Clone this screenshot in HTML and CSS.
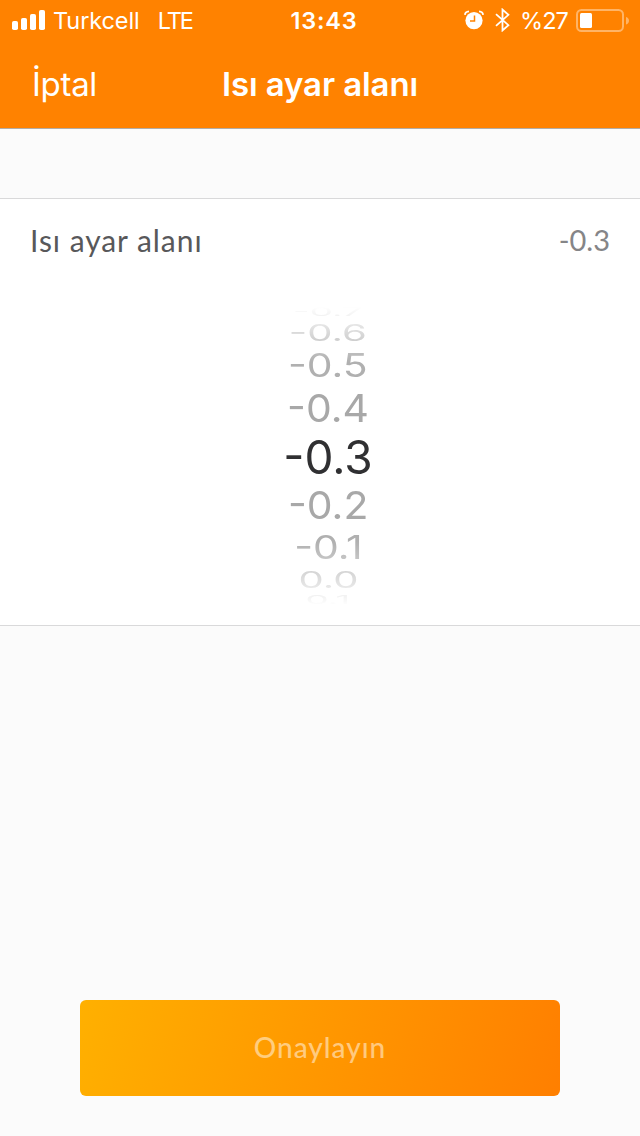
FILE: index.html
```html
<!DOCTYPE html>
<html lang="tr">
<head>
    <meta charset="UTF-8">
    <meta name="viewport" content="width=device-width, initial-scale=1.0">
    <title>Isı ayar alanı</title>
    <link rel="stylesheet" href="styles.css">
</head>
<body>
    <div class="container">
        <header>
            <div class="status-bar">
                <div class="status-left">
                    <svg class="signal" width="34" height="20" viewBox="0 0 34 20" fill="#fff">
                        <rect x="0" y="11" width="6" height="9" rx="1.8"/>
                        <rect x="9" y="8" width="6" height="12" rx="1.8"/>
                        <rect x="18" y="4" width="6" height="16" rx="1.8"/>
                        <rect x="27" y="0" width="6" height="20" rx="1.8"/>
                    </svg>
                    <span class="carrier">Turkcell</span>
                    <span class="network">LTE</span>
                </div>
                <span class="time">13:43</span>
                <div class="status-right">
                    <svg class="alarm" width="20" height="20" viewBox="0 0 20 20">
                        <path d="M0.9 4.8 Q1.2 1.6 5 1.3 M19.1 4.8 Q18.8 1.6 15 1.3" fill="none" stroke="#fff" stroke-width="1.8"/>
                        <circle cx="10" cy="10.6" r="8.6" fill="#fff"/>
                        <path d="M10.5 5.5 V11 H6" fill="none" stroke="#ff8200" stroke-width="1.5"/>
                    </svg>
                    <svg class="bluetooth" width="15" height="24" viewBox="0 0 15 24">
                        <path d="M1 6.2 L13.4 17.2 L7.5 22.4 V1.6 L13.4 6.8 L1 17.8" fill="none" stroke="#fff" stroke-width="1.8"/>
                    </svg>
                    <span class="percent">%27</span>
                    <svg class="battery" width="54" height="24" viewBox="0 0 54 24">
                        <rect x="1" y="2" width="46" height="21" rx="4.5" fill="none" stroke="#fff" stroke-opacity="0.4" stroke-width="2"/>
                        <rect x="4" y="5" width="12" height="15" rx="1.5" fill="#fff"/>
                        <path d="M50 9 Q53 10 53 12.8 Q53 15.6 50 16.6 Z" fill="#fff" fill-opacity="0.4"/>
                    </svg>
                </div>
            </div>
            <div class="nav-bar">
                <span class="cancel">İptal</span>
                <span class="title">Isı ayar alanı</span>
            </div>
        </header>

        <div class="card">
            <div class="setting">
                <span class="setting-name">Isı ayar alanı</span>
                <span class="setting-value">-0.3</span>
            </div>
            <div class="picker">
                <div class="item up-4"><span>-0.7</span></div>
                <div class="item up-3"><span>-0.6</span></div>
                <div class="item up-2"><span>-0.5</span></div>
                <div class="item up-1"><span>-0.4</span></div>
                <div class="item selected"><span>-0.3</span></div>
                <div class="item down-1"><span>-0.2</span></div>
                <div class="item down-2"><span>-0.1</span></div>
                <div class="item down-3"><span>0.0</span></div>
                <div class="item down-4"><span>0.1</span></div>
            </div>
        </div>

        <button class="confirm" disabled>Onaylayın</button>
    </div>
</body>
</html>
```
FILE: styles.css
```css
:root {
    --primary-color: #ff8200;
    --background-color: #fbfbfb;
    --line-color: #d9d9da;
}

* {
    box-sizing: border-box;
}

body {
    margin: 0;
    font-family: 'Inter', sans-serif;
    background-color: var(--background-color);
}

.container {
    display: flex;
    flex-direction: column;
    height: 1136px;
    overflow: hidden;
}

header {
    height: 129px;
    background-color: var(--primary-color);
    border-bottom: 1px solid #b2aca6;
    color: #fff;
}

.status-bar {
    display: grid;
    grid-template-columns: 1fr 76px 1fr;
    align-items: center;
    height: 40px;
    font-size: 23.5px;
    line-height: 38px;
}

.status-bar span {
    padding-top: 2px;
}

.status-left {
    display: flex;
    align-items: center;
    height: 40px;
    padding-left: 12px;
}

.carrier {
    margin-left: 7px;
    font-weight: 380;
    letter-spacing: -0.1px;
}

.network {
    margin-left: 18px;
    font-weight: 380;
    letter-spacing: -2px;
}

.time {
    padding-left: 8px;
    text-align: center;
    font-weight: 600;
    letter-spacing: 0.8px;
}

.status-right {
    display: flex;
    align-items: center;
    justify-content: flex-end;
    height: 40px;
    padding-right: 10px;
}

.bluetooth {
    margin-left: 11px;
}

.percent {
    margin-left: 10px;
    font-weight: 380;
    letter-spacing: -0.9px;
}

.battery {
    margin-left: 8px;
}

.nav-bar {
    display: grid;
    grid-template-columns: 1fr auto 1fr;
    height: 88px;
    line-height: 88px;
    font-size: 33px;
}

.cancel {
    padding-left: 32px;
    letter-spacing: -0.3px;
}

.title {
    font-weight: 600;
    letter-spacing: -0.1px;
}

.card {
    height: 428px;
    margin-top: 69px;
    background-color: #fff;
    border-top: 1px solid var(--line-color);
    border-bottom: 1px solid var(--line-color);
}

.setting {
    display: flex;
    justify-content: space-between;
    height: 84px;
    padding: 0 30px;
    font-family: 'Lato', sans-serif;
    font-size: 30px;
    line-height: 82px;
    color: #58585a;
}

.setting-name {
    letter-spacing: 0.95px;
}

.setting-value {
    font-size: 29px;
    color: #858587;
}

.picker {
    display: flex;
    flex-direction: column;
    height: 308px;
    margin-top: 19px;
    padding-left: 16px;
    mask-image: linear-gradient(transparent 5px, #000 60px, #000 240px, transparent 304px);
}

.item {
    display: flex;
    justify-content: center;
    align-items: center;
    flex-shrink: 0;
    font-size: 46px;
    font-weight: 390;
    line-height: 46px;
    color: #b0b0b0;
}

/* the wheel gets flatter and paler away from the centre */
.selected {
    height: 55px;
    color: #303032;
}

.up-1 { height: 42px; color: #a8a8a8; }
.up-2 { height: 44px; }
.up-3 { height: 21px; }
.up-4 { height: 20px; }
.down-1 { height: 41px; color: #a8a8a8; }
.down-2 { height: 44px; }
.down-3 { height: 21px; }
.down-4 { height: 20px; }

.up-1 span, .down-1 span { transform: scale(0.89, 0.84); }
.up-2 span, .down-2 span { transform: scale(0.89, 0.7); }
.up-3 span, .down-3 span { transform: scale(0.87, 0.49); }
.up-4 span, .down-4 span { transform: scale(0.8, 0.25); }

.confirm {
    width: 480px;
    height: 96px;
    margin: 374px auto 0;
    padding: 0 0 3px;
    border: none;
    border-radius: 6px;
    background: linear-gradient(105deg, #ffb000, #ff7f00);
    font-family: 'Lato', sans-serif;
    font-size: 28px;
    font-weight: 500;
    letter-spacing: 1px;
    color: rgba(255, 255, 255, 0.5);
}
```
